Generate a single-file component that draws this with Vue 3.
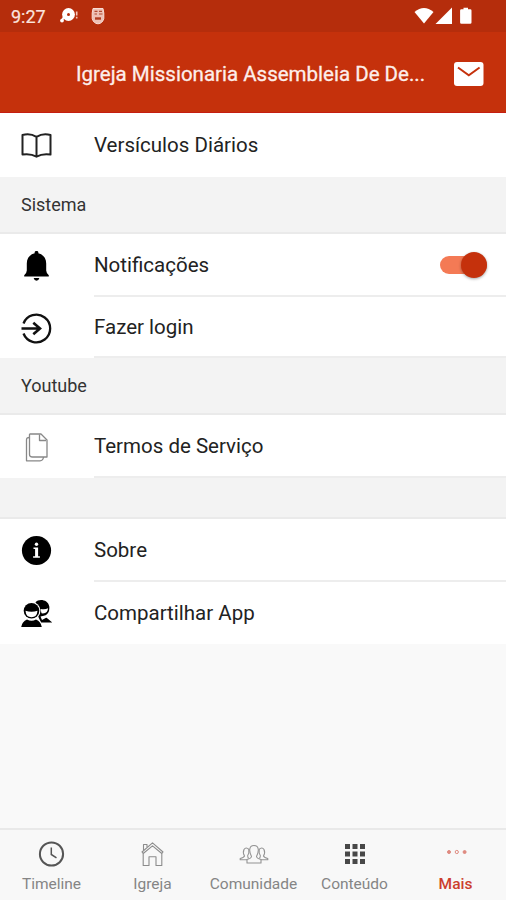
<script setup>
import { ref } from 'vue'

const notifications = ref(true)

const groups = [
  { title: null, items: [{ label: 'Versículos Diários', icon: 'book' }] },
  {
    title: 'Sistema',
    items: [
      { label: 'Notificações', icon: 'bell', toggle: true },
      { label: 'Fazer login', icon: 'login' },
    ],
  },
  { title: 'Youtube', items: [{ label: 'Termos de Serviço', icon: 'docs' }] },
  {
    title: '',
    items: [
      { label: 'Sobre', icon: 'info' },
      { label: 'Compartilhar App', icon: 'people' },
    ],
  },
]

const tabs = [
  { label: 'Timeline', icon: 'clock' },
  { label: 'Igreja', icon: 'home' },
  { label: 'Comunidade', icon: 'community' },
  { label: 'Conteúdo', icon: 'grid' },
  { label: 'Mais', icon: 'more', active: true },
]
</script>

<template>
  <div class="screen">
    <div class="status">
      <span class="time">9:27</span>
      <svg class="st-chat" width="20" height="18" viewBox="0 0 20 18">
        <circle cx="8.5" cy="7.500" r="6.400" fill="#fff" />
        <circle cx="2" cy="13.600" r="1.900" fill="#fff" />
        <path d="M4 10l-2 3" stroke="#fff" stroke-width="2" />
        <circle cx="8.500" cy="7.500" r="1.500" fill="#b52d0c" />
        <path d="M16.700 4.500v4M16.700 9.800v1.800" stroke="#f3c5ba" stroke-width="1.600" />
      </svg>
      <svg class="st-shield" width="14" height="18" viewBox="0 0 14 18">
        <path d="M2 1.500H12L12.800 6V11.500Q11.500 16.500 7 16.800Q2.500 16.500 1.200 11.500V6Z" fill="#eec0b5" stroke="#f8ddd6" stroke-width="1" />
        <path d="M3.500 4.300h3M8 4.300h3M3.500 7h2.500M8 7h3.500" stroke="#b04a32" stroke-width="1.200" />
        <path d="M4 11.500h6" stroke="#b13c20" stroke-width="2.400" />
      </svg>
      <svg class="st-system" width="62" height="20" viewBox="0 0 62 20">
        <path d="M.5 6Q10-2 19.500 6L10 17.500Z" fill="#fff" />
        <path d="M21.500 18L38 1.500V18Z" fill="#fff" />
        <path d="M49.500 1.800h4.500v1.500h2.200a1.300 1.300 0 0 1 1.300 1.300v11.900a1.300 1.300 0 0 1-1.300 1.300h-8.800a1.300 1.300 0 0 1-1.300-1.300V4.600A1.300 1.300 0 0 1 47.400 3.300h2.100Z" fill="#fff" />
      </svg>
    </div>

    <header class="header">
      <h1>Igreja Missionaria Assembleia De De...</h1>
      <svg class="mail" width="30" height="24" viewBox="0 0 30 24">
        <rect width="29.500" height="24" rx="3" fill="#fff" />
        <path d="M4 5.500L14.800 13.200L25.600 5.500" fill="none" stroke="#c5310c" stroke-width="2" />
      </svg>
    </header>

    <main>
      <section v-for="(g, gi) in groups" :key="gi" class="group">
        <h2 v-if="g.title !== null" :class="['divider', { blank: !g.title }]">{{ g.title }}</h2>
        <div v-for="item in g.items" :key="item.label" :class="['row', item.icon]">
          <svg class="row-icon" width="32" height="32" viewBox="0 0 32 32">
            <g v-if="item.icon === 'book'" fill="none" stroke="#222" stroke-width="2" stroke-linejoin="round">
              <path d="M16.500 7.800Q10 3.900 2.500 6V25.500Q10.500 24.200 16.500 27.700Q22.500 24.200 30.500 25.500V6Q23 3.900 16.500 7.800V27.500" />
            </g>
            <g v-else-if="item.icon === 'bell'" fill="#000">
              <path d="M16.500 1a1.800 1.800 0 0 1 1.800 2.200C23.500 4.500 26.200 8.500 26.200 13.500V20.500Q26.400 23.500 28.800 25.200V26.500H4.200V25.200Q6.600 23.500 6.800 20.500V13.500C6.800 8.500 9.500 4.500 14.700 3.200A1.800 1.800 0 0 1 16.500 1Z" />
              <path d="M13.600 28h5.800Q18.600 30.800 16.500 30.800T13.600 28Z" />
            </g>
            <g v-else-if="item.icon === 'login'" fill="none" stroke="#111" stroke-width="2.300">
              <path d="M3.500 11.500A13.800 13.800 0 1 1 3.500 21.500" />
              <path d="M1.500 16.500H20M13.300 10.700L20 16.500L13.300 22.300" stroke-width="2.600" />
            </g>
            <g v-else-if="item.icon === 'docs'" fill="none" stroke="#888" stroke-width="1.300" stroke-linejoin="round">
              <path d="M10 3H21L27 9V26H12.500Q9.500 26 9.500 23.500V3.500Z" />
              <path d="M19.500 3.500V9.500H26" />
              <path d="M9.500 6.500Q6.500 6.500 6.500 9V29.800H20Q23 29.800 23.500 26" />
            </g>
            <g v-else-if="item.icon === 'info'">
              <circle cx="16.500" cy="15.500" r="14.600" fill="#000" />
              <path d="M13.500 12.500h4.600v8.800h1.800v1.400h-6.800v-1.400h2v-7.400H13.500Z" fill="#fff" />
              <circle cx="16.500" cy="9.200" r="1.700" fill="#fff" />
            </g>
            <g v-else>
              <path d="M15.500 5.200C19 1.500 28 2.500 29.300 9.500Q30 16 24.500 19L32.300 25.500H21L17.500 18Z" fill="#000" />
              <path d="M20.500 12Q25 13 28 11.300Q28 17 21.500 16.300Z" fill="#fff" />
              <path d="M20.500 19.500L25 18.500L27 20.200L22 23Z" fill="#fff" />
              <circle cx="11.500" cy="13.800" r="9" fill="#fff" />
              <circle cx="11.500" cy="13.800" r="7.800" fill="#000" />
              <path d="M5.500 13.800Q11.500 15.800 17.500 13.800Q17 20.300 11.500 20.300T5.500 13.800Z" fill="#fff" />
              <path d="M1.200 30Q2 24.500 7 22.500Q11.500 25.200 16 22.500Q21 24.500 21.800 30Z" fill="#000" stroke="#fff" stroke-width="1.500" paint-order="stroke" />
            </g>
          </svg>
          <div class="cell">
            <span class="label">{{ item.label }}</span>
            <button
              v-if="item.toggle"
              type="button"
              role="switch"
              :aria-checked="notifications"
              :class="['switch', { on: notifications }]"
              @click="notifications = !notifications"
            ><i></i></button>
          </div>
        </div>
      </section>
    </main>

    <nav class="tabs">
      <a v-for="t in tabs" :key="t.label" :class="['tab', { active: t.active }]">
        <svg width="30" height="28" viewBox="0 0 30 28">
          <g v-if="t.icon === 'clock'" fill="none" stroke="#555">
            <circle cx="14.500" cy="14" r="11.600" stroke-width="2" />
            <path d="M14.300 7.500V14.500L19.500 17.800" stroke-width="1.500" />
          </g>
          <g v-else-if="t.icon === 'home'" fill="none" stroke="#8c8c8c" stroke-width="1.100" stroke-linejoin="round">
            <path d="M4 12L14.500 2.800L25 12L23.800 13.500L14.500 5.800L5.200 13.500Z" />
            <path d="M5.500 10V4.500H9V7M5.200 13.500V25.500H11V16.800H18V25.500H23.800V13.500" />
          </g>
          <g v-else-if="t.icon === 'community'" fill="none" stroke="#929292" stroke-width="1.100" stroke-linejoin="round">
            <path d="M12.500 16.500C10 12 9.500 5.500 15 5.500S20 12 17.500 16.500Q17.800 18.500 22 19.500V23H8V19.500Q12.200 18.500 12.500 16.500Z" />
            <path d="M10 9.500Q7 6.500 5 9.500Q3.500 12.500 5.500 16Q5 17.500 1.200 18.500V19.800H8M8.500 16L9.500 18.500M8.500 16Q10.500 13 9.800 9.500" />
            <path d="M20 9.500Q23 6.500 25 9.500Q26.500 12.500 24.500 16Q25 17.500 28.800 18.500V19.800H22M21.500 16L20.500 18.500M21.500 16Q19.500 13 20.200 9.500" />
          </g>
          <g v-else-if="t.icon === 'grid'" fill="#484848">
            <rect v-for="n in 9" :key="n" :x="5 + ((n - 1) % 3) * 7.500" :y="4 + Math.floor((n - 1) / 3) * 7.500" width="5" height="5" />
          </g>
          <g v-else fill="#df8a80" stroke="#df8a80" stroke-width="1">
            <circle cx="8" cy="12" r="1.500" />
            <circle cx="15.800" cy="12" r="1.600" fill="none" />
            <circle cx="23.600" cy="12" r="1.500" />
          </g>
        </svg>
        <span>{{ t.label }}</span>
      </a>
    </nav>
  </div>
</template>

<style>
body {
  background: #f9f9f9;
}
</style>

<style scoped>
.screen {
  display: flex;
  flex-direction: column;
  width: 506px;
  height: 900px;
  overflow: hidden;
  background: #f9f9f9;
  font-family: Roboto, sans-serif;
  color: #222;
}
.status {
  display: flex;
  align-items: center;
  flex: none;
  height: 32px;
  box-sizing: border-box;
  padding: 0 30px 0 11px;
  background: #b52d0c;
}
.time {
  width: 49px;
  padding-top: 1px;
  font-size: 18px;
  line-height: 32px;
  color: #fbe4df;
  -webkit-text-stroke: 0.2px #fbe4df;
}
.st-shield {
  margin-left: 11px;
}
.st-system {
  margin-left: auto;
}
.header {
  display: flex;
  align-items: center;
  flex: none;
  height: 81px;
  box-sizing: border-box;
  padding: 4px 22px 0 76px;
  background: #c5310c;
  border-bottom: 1px solid #c51d10;
}
.header h1 {
  flex: 1;
  margin: 0;
  font-size: 20.5px;
  font-weight: 400;
  line-height: 28px;
  color: #fdeeea;
  -webkit-text-stroke: 0.3px #fdeeea;
  white-space: nowrap;
}
.mail {
  flex: none;
}
.divider {
  height: 57px;
  box-sizing: border-box;
  margin: 0;
  padding: 0 21px;
  border-bottom: 2px solid #eaeaea;
  background: #f3f3f3;
  font-size: 18px;
  font-weight: 400;
  line-height: 55px;
  color: #333;
}
.divider.blank {
  height: 41px;
}
.row {
  display: flex;
  align-items: center;
  height: 63px;
  padding-left: 20px;
  background: #fff;
}
.row.book {
  height: 64px;
}
.row.login {
  height: 61px;
}
.row.people {
  height: 62px;
}
.row-icon {
  flex: none;
  margin-right: 42px;
}
.cell {
  display: flex;
  align-items: center;
  justify-content: space-between;
  flex: 1;
  height: 100%;
  box-sizing: border-box;
  padding-right: 19px;
  border-bottom: 2px solid #ededed;
}
.login .cell {
  padding-top: 1px;
}
.book .cell,
.people .cell {
  border-bottom: 0;
}
.label {
  font-size: 20.5px;
  line-height: 28px;
}
.switch {
  display: flex;
  align-items: center;
  width: 47px;
  height: 18px;
  padding: 0;
  border: 0;
  border-radius: 9px;
  background: #bbb;
}
.switch i {
  width: 26px;
  height: 26px;
  flex: none;
  border-radius: 50%;
  background: #eee;
  box-shadow: 0 1px 3px rgba(0, 0, 0, 0.35);
}
.switch.on {
  justify-content: flex-end;
  background: #f47a55;
}
.switch.on i {
  background: #c5310c;
}
.tabs {
  display: flex;
  flex: none;
  height: 72px;
  box-sizing: border-box;
  margin-top: auto;
  padding-left: 1px;
  border-top: 2px solid #e9e9e9;
  background: #f8f8f8;
}
.tab {
  display: flex;
  flex-direction: column;
  align-items: center;
  flex: 1 1 0;
  min-width: 0;
  padding-top: 10px;
  font-size: 15.5px;
  line-height: 20px;
  color: #858585;
}
.tab span {
  margin-top: 6px;
}
.tab.active {
  font-weight: 500;
  color: #cc3e2d;
}
</style>
